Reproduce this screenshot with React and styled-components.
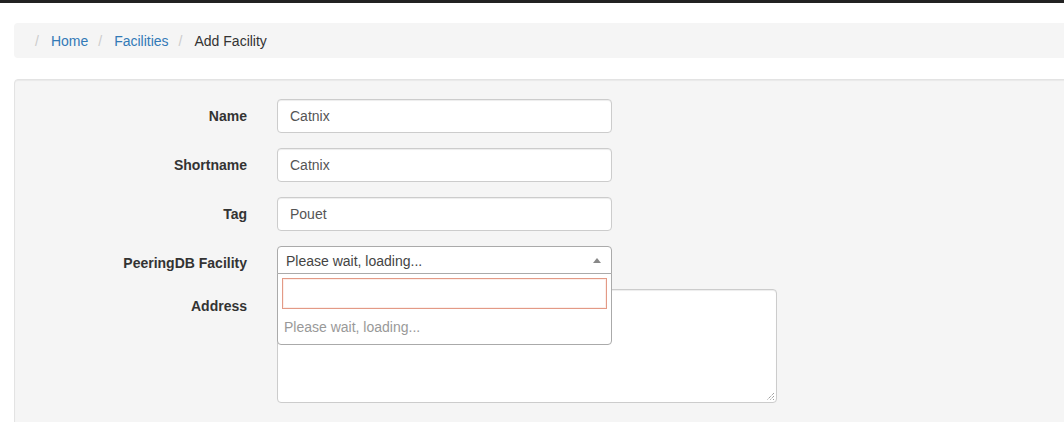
import styled, { createGlobalStyle } from "styled-components";

const GlobalStyle = createGlobalStyle`
  html, body {
    margin: 0;
    padding: 0;
    overflow: hidden;
    background: #fff;
    font-family: "Liberation Sans", Arial, sans-serif;
    font-size: 14px;
    color: #333;
  }
  * { box-sizing: border-box; }
`

const TopBar = styled.div`
  height: 3px;
  background: #222;
`

const Page = styled.div`
  padding: 20px 0 0 14px;
  width: 1120px;
`

const Breadcrumb = styled.ol`
  list-style: none;
  margin: 0 0 21px;
  padding: 8px 15px;
  height: 35px;
  background: #f5f5f5;
  border-radius: 4px;
  display: flex;
  align-items: center;
  line-height: 20px;
`

const Crumb = styled.li`
  &::before {
    content: "/";
    color: #ccc;
    padding: 0 12px 0 6px;
  }
  & + &::before {
    padding: 0 12px 0 10px;
  }
  a {
    color: #337ab7;
    text-decoration: none;
  }
`

const Well = styled.div`
  background: #f5f5f5;
  border: 1px solid #e3e3e3;
  border-radius: 4px;
  box-shadow: inset 0 1px 1px rgba(0,0,0,.05);
  padding: 19px 19px 40px;
  min-height: 360px;
`

const Form = styled.div`
  display: grid;
  grid-template-columns: 213px 500px;
  column-gap: 30px;
  row-gap: 15px;
  align-items: start;
`

const Label = styled.label`
  font-weight: bold;
  text-align: right;
  padding-top: 9px;
  line-height: 16px;
`

const Input = styled.div`
  width: ${({ $w }) => $w || "335px"};
  height: ${({ $h }) => $h || "34px"};
  background: #fff;
  border: 1px solid #ccc;
  border-radius: 4px;
  box-shadow: inset 0 1px 1px rgba(0,0,0,.075);
  padding: 7px 12px;
  line-height: 18px;
  color: #555;
  position: relative;
`

const Resize = styled.svg`
  position: absolute;
  right: 1px;
  bottom: 1px;
`

const SelectWrap = styled.div`
  position: relative;
  width: 335px;
  height: 28px;
`

const SelectBox = styled.div`
  height: 28px;
  background: #fff;
  border: 1px solid #aaa;
  border-radius: 4px 4px 0 0;
  padding: 1px 8px 0;
  line-height: 26px;
  color: #444;
  display: flex;
  justify-content: space-between;
  align-items: center;
`

const Arrow = styled.span`
  width: 0;
  height: 0;
  border-left: 4px solid transparent;
  border-right: 4px solid transparent;
  border-bottom: 5px solid #888;
  margin-right: 2px;
`

const Dropdown = styled.div`
  position: absolute;
  top: 27px;
  left: 0;
  width: 335px;
  background: #fff;
  border: 1px solid #aaa;
  border-radius: 0 0 4px 4px;
  z-index: 2;
  padding: 4px 4px 0;
`

const Search = styled.div`
  height: 31px;
  border: 1px solid #e39a86;
  box-shadow: inset 0 0 0 1px rgba(233,150,122,.15);
`

const Loading = styled.div`
  color: #999;
  padding: 9px 2px 8px;
  line-height: 18px;
`

export default function App() {
  return (
    <>
      <GlobalStyle />
      <TopBar />
      <Page>
        <Breadcrumb>
          <Crumb><a href="#">Home</a></Crumb>
          <Crumb><a href="#">Facilities</a></Crumb>
          <Crumb>Add Facility</Crumb>
        </Breadcrumb>
        <Well>
          <Form>
            <Label>Name</Label>
            <Input>Catnix</Input>
            <Label>Shortname</Label>
            <Input>Catnix</Input>
            <Label>Tag</Label>
            <Input>Pouet</Input>
            <Label>PeeringDB Facility</Label>
            <SelectWrap>
              <SelectBox>
                <span>Please wait, loading...</span>
                <Arrow />
              </SelectBox>
              <Dropdown>
                <Search />
                <Loading>Please wait, loading...</Loading>
              </Dropdown>
            </SelectWrap>
            <Label>Address</Label>
            <Input $w="500px" $h="114px">
              <Resize width="9" height="9" viewBox="0 0 9 9">
                <path d="M8 1 L1 8 M8 4 L4 8 M8 7 L7 8" stroke="#777" strokeWidth="1" strokeDasharray="1 1" />
              </Resize>
            </Input>
          </Form>
        </Well>
      </Page>
    </>
  );
}
